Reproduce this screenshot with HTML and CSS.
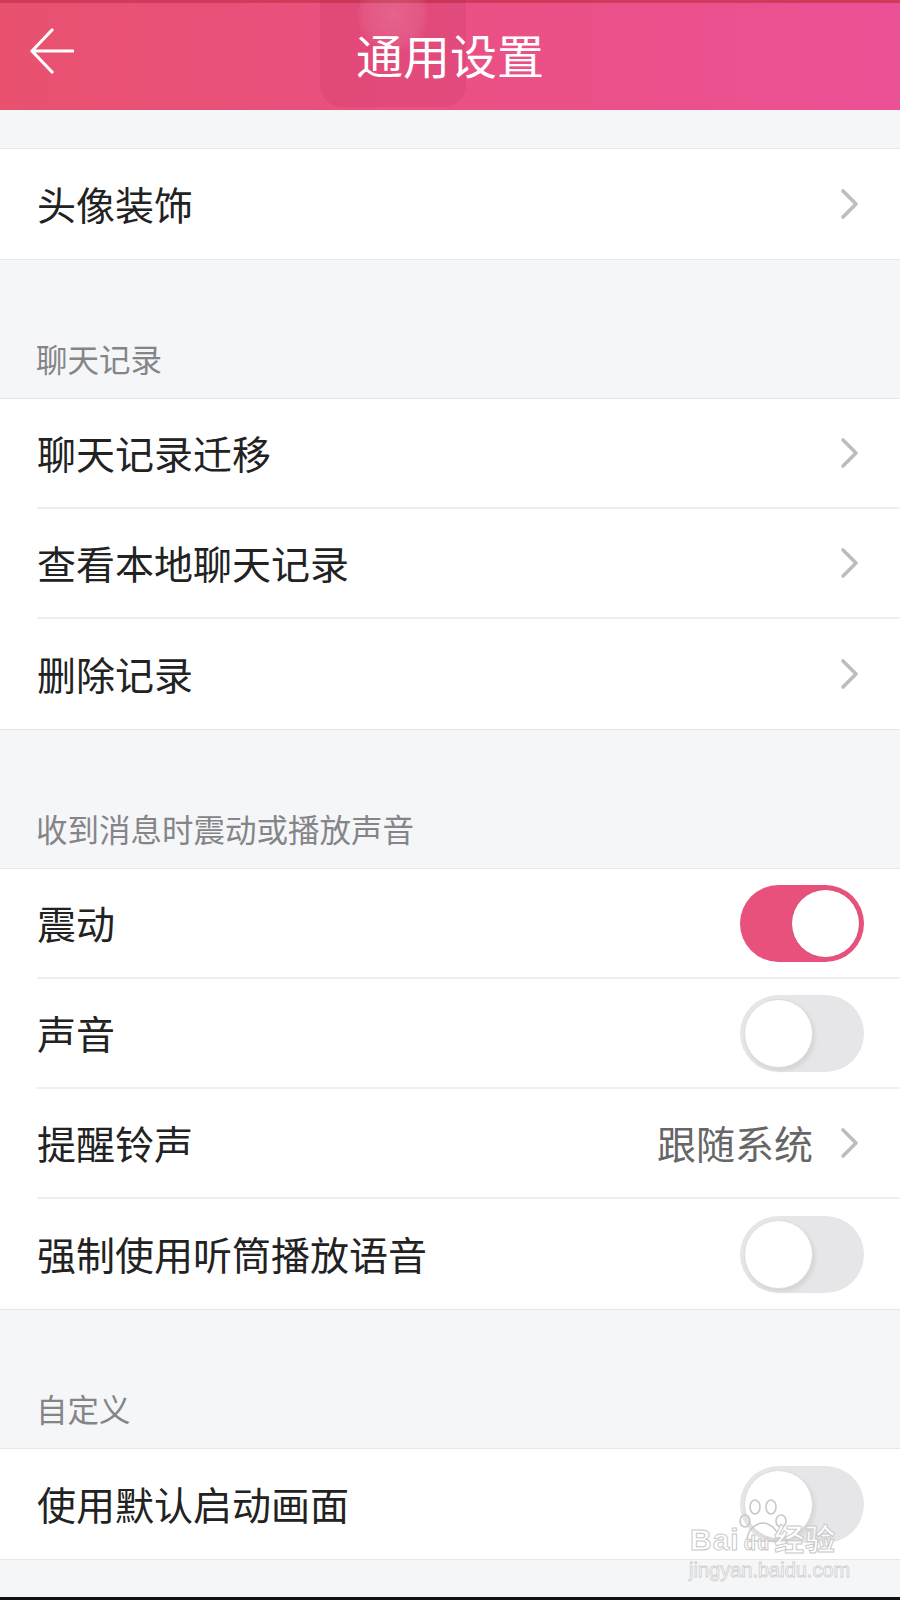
FILE: index.html
```html
<!DOCTYPE html>
<html lang="zh-CN">
<head>
<meta charset="utf-8">
<title>通用设置</title>
<link rel="stylesheet" href="styles.css">
</head>
<body>
<div class="page">
  <header class="topbar">
    <span class="back">
      <svg width="44" height="46" viewBox="0 0 44 46"><path d="M22 2 L2 23 L22 44 M2 23 H43" fill="none" stroke="#fff" stroke-width="3.2" stroke-linecap="round" stroke-linejoin="round"/></svg>
    </span>
    <h1 class="title">通用设置</h1>
    <div class="ghost"><div class="ghost-dot"></div></div>
  </header>

  <div class="spacer"></div>

  <section class="group">
    <div class="row"><span class="label">头像装饰</span><span class="chev"><svg width="20" height="32" viewBox="0 0 20 32"><path d="M3 3 L16 16 L3 29" fill="none" stroke="#bdbdbd" stroke-width="3.6" stroke-linecap="round" stroke-linejoin="round"/></svg></span></div>
  </section>

  <div class="section-title">聊天记录</div>
  <section class="group">
    <div class="row"><span class="label">聊天记录迁移</span><span class="chev"><svg width="20" height="32" viewBox="0 0 20 32"><path d="M3 3 L16 16 L3 29" fill="none" stroke="#bdbdbd" stroke-width="3.6" stroke-linecap="round" stroke-linejoin="round"/></svg></span></div>
    <div class="row"><span class="label">查看本地聊天记录</span><span class="chev"><svg width="20" height="32" viewBox="0 0 20 32"><path d="M3 3 L16 16 L3 29" fill="none" stroke="#bdbdbd" stroke-width="3.6" stroke-linecap="round" stroke-linejoin="round"/></svg></span></div>
    <div class="row"><span class="label">删除记录</span><span class="chev"><svg width="20" height="32" viewBox="0 0 20 32"><path d="M3 3 L16 16 L3 29" fill="none" stroke="#bdbdbd" stroke-width="3.6" stroke-linecap="round" stroke-linejoin="round"/></svg></span></div>
  </section>

  <div class="section-title">收到消息时震动或播放声音</div>
  <section class="group">
    <div class="row"><span class="label">震动</span><span class="toggle on"><span class="knob"></span></span></div>
    <div class="row"><span class="label">声音</span><span class="toggle"><span class="knob"></span></span></div>
    <div class="row"><span class="label">提醒铃声</span><span class="value">跟随系统</span><span class="chev"><svg width="20" height="32" viewBox="0 0 20 32"><path d="M3 3 L16 16 L3 29" fill="none" stroke="#bdbdbd" stroke-width="3.6" stroke-linecap="round" stroke-linejoin="round"/></svg></span></div>
    <div class="row"><span class="label">强制使用听筒播放语音</span><span class="toggle"><span class="knob"></span></span></div>
  </section>

  <div class="section-title">自定义</div>
  <section class="group">
    <div class="row"><span class="label">使用默认启动画面</span><span class="toggle"><span class="knob"></span></span></div>
  </section>

  <div class="bottom-fill"></div>
  <div class="bottom-edge"></div>

  <div class="watermark">
    <svg class="paw" width="60" height="50" viewBox="0 0 60 50"><g fill="none" stroke="#c8c8c8" stroke-width="1.6"><ellipse cx="22" cy="10" rx="5" ry="7"/><ellipse cx="38" cy="10" rx="5" ry="7"/><ellipse cx="12" cy="24" rx="5" ry="6"/><ellipse cx="48" cy="24" rx="5" ry="6"/><path d="M14 44 C14 32 24 26 30 26 C36 26 46 32 46 44 Z"/></g></svg>
    <div class="wm-main">Bai<span class="wm-du">du</span>经验</div>
    <div class="wm-sub">jingyan.baidu.com</div>
  </div>
</div>
</body>
</html>
```

FILE: styles.css
```css
* { box-sizing: border-box; }
html, body { margin: 0; padding: 0; }
body {
  background: #f5f6f8;
  font-family: "Noto Sans CJK SC", "Noto Sans", sans-serif;
  color: #222;
}
.page {
  position: relative;
  width: 900px;
  height: 1600px;
  overflow: hidden;
  display: flex;
  flex-direction: column;
}
.topbar {
  position: relative;
  height: 110px;
  flex: none;
  border-top: 3px solid #cf3b5b;
  background: linear-gradient(90deg, #e9516f 0%, #ea5081 45%, #ec5196 100%);
  display: flex;
  align-items: center;
  justify-content: center;
}
.back {
  position: absolute;
  left: 30px;
  top: 25px;
  display: flex;
}
.title {
  margin: 0;
  font-weight: 400;
  font-size: 47px;
  line-height: 1;
  color: #fff;
  padding-bottom: 6px;
  position: relative;
  z-index: 2;
}
.ghost {
  position: absolute;
  left: 320px;
  top: -3px;
  width: 146px;
  height: 107px;
  border-radius: 0 0 22px 22px;
  background: rgba(140, 20, 60, 0.09);
  z-index: 1;
}
.ghost-dot {
  position: absolute;
  left: 38px;
  top: -25px;
  width: 70px;
  height: 80px;
  border-radius: 50%;
  background: radial-gradient(circle, rgba(255,255,255,0.14) 0%, rgba(255,255,255,0.07) 55%, rgba(255,255,255,0) 72%);
}
.spacer { height: 38px; flex: none; }
.group {
  background: #fff;
  border-top: 1px solid #e7e7ea;
  border-bottom: 1px solid #e7e7ea;
  flex: none;
  padding-left: 37px;
}
.row {
  height: 110px;
  display: flex;
  align-items: center;
  padding-right: 36px;
  border-bottom: 2px solid #efeff1;
}
.row:last-child { border-bottom: none; }
.label {
  font-size: 39px;
  line-height: 1;
  color: #222;
  flex: 1;
  padding-bottom: 2px;
}
.value {
  font-size: 39px;
  line-height: 1;
  color: #666;
  margin-right: 27px;
  padding-bottom: 2px;
}
.chev {
  display: flex;
  margin-right: 4px;
}
.section-title {
  flex: none;
  height: 138px;
  padding: 78px 0 0 36px;
  font-size: 31.5px;
  line-height: 40px;
  color: #858589;
}
.toggle {
  position: relative;
  width: 124px;
  height: 77px;
  border-radius: 39px;
  background: #e6e6e9;
  flex: none;
}
.toggle .knob {
  position: absolute;
  top: 4px;
  left: 4px;
  width: 69px;
  height: 69px;
  border-radius: 50%;
  background: #fff;
  border: 1px solid #dcdcdc;
  box-shadow: 2px 3px 4px rgba(0,0,0,0.08);
}
.toggle.on { background: #e8517c; }
.toggle.on .knob {
  left: auto;
  right: 4px;
  border-color: #d24a72;
  box-shadow: none;
}
.bottom-fill { flex: 1; }
.bottom-edge { height: 3px; background: #111; flex: none; }
.watermark {
  position: absolute;
  left: 688px;
  top: 1497px;
  width: 170px;
  font-family: "Liberation Sans", "Noto Sans CJK SC", sans-serif;
  color: #fff;
}
.paw {
  position: absolute;
  left: 45px;
  top: 0;
}
.wm-main {
  position: absolute;
  top: 26px;
  left: 2px;
  font-size: 30px;
  line-height: 34px;
  font-weight: 700;
  color: rgba(255,255,255,0.85);
  -webkit-text-stroke: 1px #c9c9c9;
  letter-spacing: 1px;
}
.wm-du { font-size: 20px; margin: 0 4px; }
.wm-sub {
  position: absolute;
  top: 62px;
  left: 1px;
  font-size: 20px;
  line-height: 22px;
  color: rgba(255,255,255,0.85);
  -webkit-text-stroke: 0.8px #cfcfcf;
}
```
